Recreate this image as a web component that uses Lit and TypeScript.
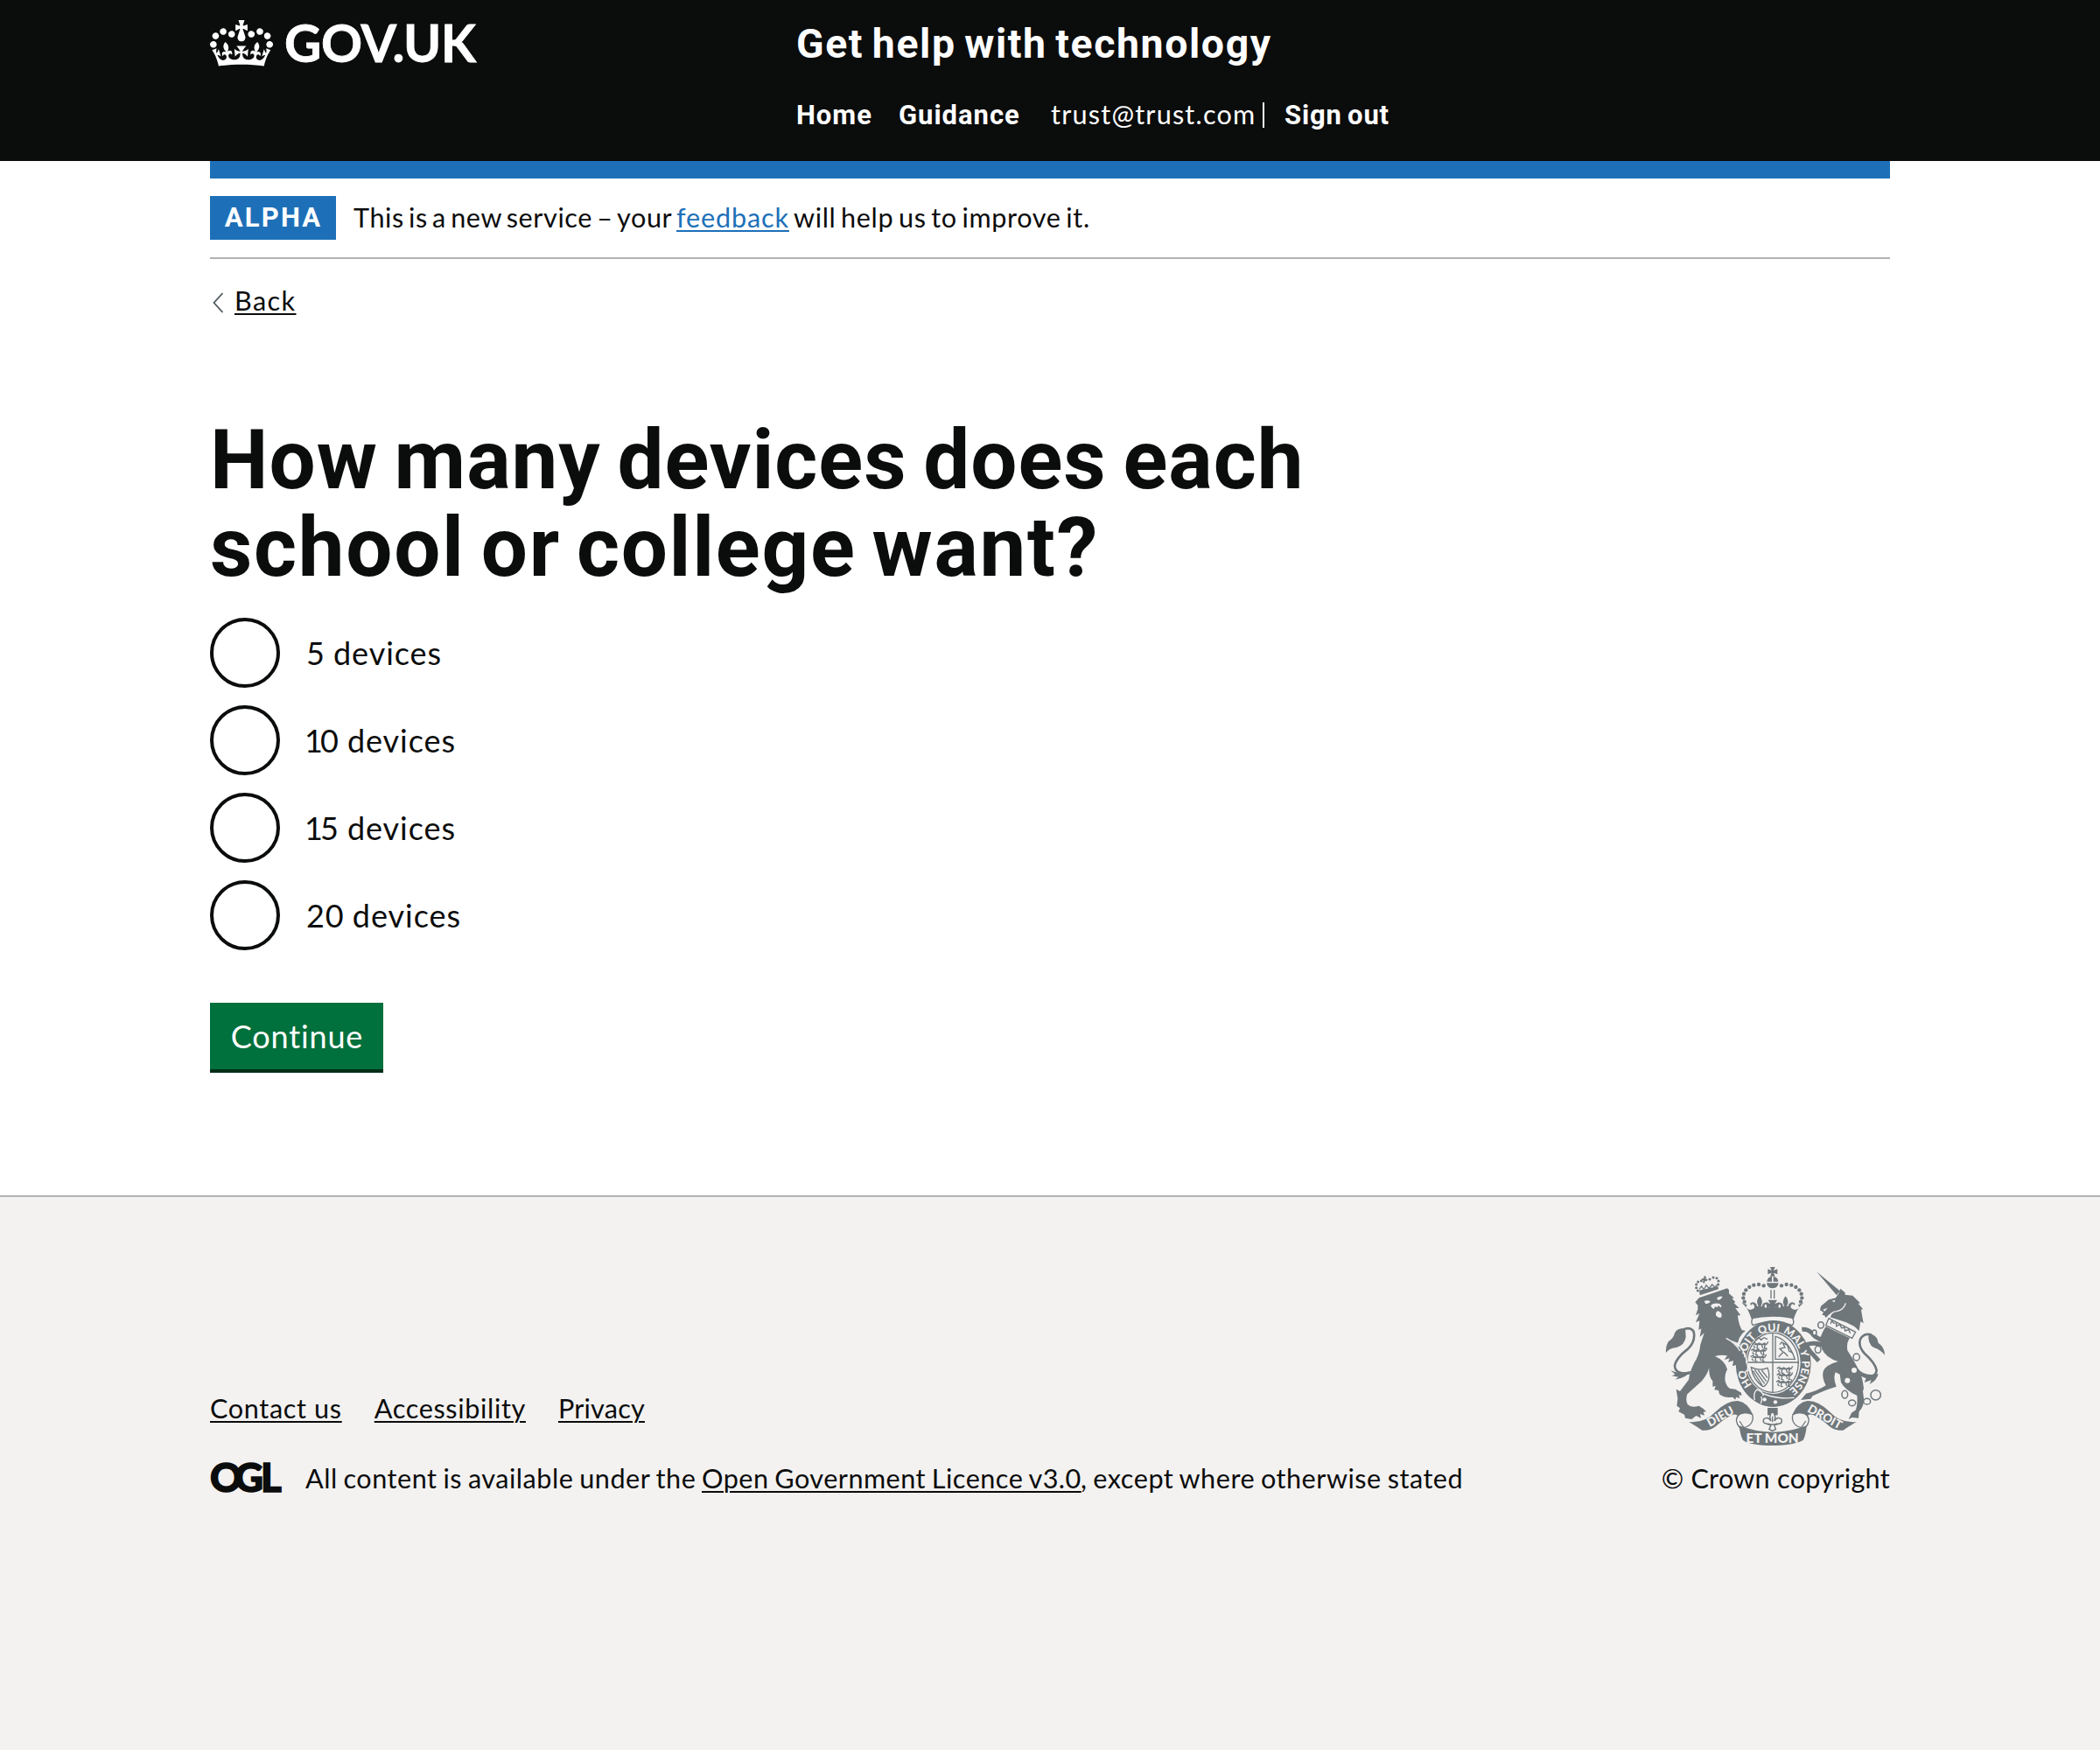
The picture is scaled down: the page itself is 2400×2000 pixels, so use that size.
import { LitElement, html, svg, css } from "lit";
import { customElement, property } from "lit/decorators.js";

const CROWN =
  "M25 30.2c3.5 1.5 7.7-.2 9.1-3.7 1.5-3.6-.2-7.8-3.9-9.2-3.6-1.4-7.6.3-9.1 3.9-1.4 3.5.3 7.5 3.9 9zM9 39.5c3.6 1.5 7.8-.2 9.2-3.7 1.5-3.6-.2-7.8-3.9-9.1-3.6-1.5-7.6.2-9.1 3.8-1.4 3.5.3 7.5 3.8 9zM4.4 57.2c3.5 1.5 7.7-.2 9.1-3.8 1.5-3.6-.2-7.7-3.9-9.1-3.5-1.5-7.6.3-9.1 3.8-1.4 3.5.3 7.6 3.9 9.1zm38.3-21.4c3.5 1.5 7.7-.2 9.1-3.8 1.5-3.6-.2-7.7-3.9-9.1-3.6-1.5-7.6.3-9.1 3.8-1.3 3.6.4 7.7 3.9 9.1zm64.4-5.6c-3.6 1.5-7.8-.2-9.1-3.7-1.5-3.6.2-7.8 3.8-9.2 3.6-1.4 7.7.3 9.2 3.9 1.3 3.5-.4 7.5-3.9 9zm15.9 9.3c-3.6 1.5-7.7-.2-9.1-3.7-1.5-3.6.2-7.8 3.7-9.1 3.6-1.5 7.7.2 9.2 3.8 1.5 3.5-.3 7.5-3.8 9zm4.7 17.7c-3.6 1.5-7.8-.2-9.2-3.8-1.5-3.6.2-7.7 3.9-9.1 3.6-1.5 7.7.3 9.2 3.8 1.3 3.5-.4 7.6-3.9 9.1zM89.3 35.8c-3.6 1.5-7.8-.2-9.2-3.8-1.4-3.6.2-7.7 3.9-9.1 3.6-1.5 7.7.3 9.2 3.8 1.4 3.6-.3 7.7-3.9 9.1zM69.7 17.7l8.9 4.7V9.3l-8.9 2.8c-.2-.3-.5-.6-.9-.9L72.4 0H59.6l3.5 11.2c-.3.3-.6.5-.9.9l-8.8-2.8v13.1l8.8-4.7c.3.3.6.7.9.9l-5 15.4v.1c-.2.8-.4 1.6-.4 2.4 0 4.1 3.1 7.5 7 8.1h.2c.3 0 .7.1 1 .1.4 0 .7 0 1-.1h.2c4-.6 7.1-4.1 7.1-8.1 0-.8-.1-1.7-.4-2.4V34l-5.1-15.4c.4-.2.7-.6 1-.9zM66 92.8c16.9 0 32.8 1.1 47.1 3.2 4-16.9 8.9-26.7 14-33.5l-9.6-3.4c1 4.9 1.1 7.2 0 10.2-1.5-1.4-3-4.3-4.2-8.7L108.6 76c2.8-2 5-3.2 7.5-3.3-4.4 9.4-10 11.9-13.6 11.2-4.3-.8-6.3-4.6-5.6-7.9 1-4.7 5.7-5.9 8-.5 4.3-8.7-3-11.4-7.6-8.8 7.1-7.2 7.9-13.5 2.1-21.1-8 6.1-8.1 12.3-4.5 20.8-4.7-5.4-12.1-2.5-9.5 6.2 3.4-5.2 7.9-2 7.2 3.1-.6 4.3-6.4 7.8-13.5 7.2-10.3-.9-10.9-8-11.2-13.8 2.5-.5 7.1 1.8 11 7.3L80.2 60c-4.1 4.4-8 5.3-12.3 5.4 1.4-4.4 8-11.6 8-11.6H55.5s6.4 7.2 7.9 11.6c-4.2-.1-8-1-12.3-5.4l1.4 16.4c3.9-5.5 8.5-7.7 10.9-7.3-.3 5.8-.9 12.8-11.1 13.8-7.2.6-12.9-2.9-13.5-7.2-.7-5 3.8-8.3 7.1-3.1 2.7-8.7-4.6-11.6-9.4-6.2 3.7-8.5 3.6-14.7-4.6-20.8-5.8 7.6-5 13.9 2.2 21.1-4.7-2.6-11.9.1-7.7 8.8 2.3-5.5 7.1-4.2 8.1.5.7 3.3-1.3 7.1-5.7 7.9-3.5.7-9-1.8-13.5-11.2 2.5.1 4.7 1.3 7.5 3.3l-4.7-15.4c-1.2 4.4-2.7 7.2-4.3 8.7-1.1-3-.9-5.3 0-10.2l-9.5 3.4c5 6.9 9.9 16.7 14 33.5 14.8-2.1 30.8-3.2 47.7-3.2z";

const BEADS: [number, number][] = [
  [407, 148], [390, 144], [373, 146], [358, 153], [346, 163], [339, 176], [337, 190], [341, 203],
];

@customElement("royal-arms")
class RoyalArms extends LitElement {
  static styles = css`
    :host { display: block; width: 250px; height: 204px; }
    svg { display: block; width: 100%; height: 100%; overflow: visible; }
    .ink { fill: #6f777b; }
    .paper { fill: #f3f2f1; }
    .line { fill: none; stroke: #6f777b; stroke-width: 4; }
    .tail { fill: none; stroke: #6f777b; stroke-width: 8; stroke-linecap: round; }
    .leg { fill: none; stroke: #6f777b; stroke-width: 15; stroke-linejoin: round; }
    .gap { fill: none; stroke: #f3f2f1; stroke-width: 4; }
    .motto { fill: #f3f2f1; font: 900 37px Lato, sans-serif; text-anchor: middle; }
    .mon { font-size: 46px; }
    .side { font-size: 41px; }
  `;

  private halfCrown() {
    return svg`
      ${BEADS.map(([x, y]) => svg`<circle class="ink" cx=${x} cy=${y} r="6.5"/>`)}
      <path class="ink" d="M331 206L350 214L346 222Q356 236 370 228Q380 222 372 212Q366 208 364 216L360 210Q366 202 376 206Q384 210 384 218L389 218Q378 200 393 184Q408 200 397 218L402 218Q402 208 412 206Q420 204 424 210L420 216Q412 208 410 216Q408 226 420 226Q430 224 433 212L438 212V236Q390 232 360 246Q350 222 331 206Z"/>
    `;
  }

  private ribbonEnd() {
    return svg`
      <path class="ink" d="M150 615Q205 620 240 582Q280 542 318 543Q352 548 370 590Q340 578 318 594Q306 584 286 598Q262 612 240 632Q222 646 196 644Q176 630 150 615Z"/>
      <path class="line" d="M318 594Q306 612 324 634Q348 638 362 622Q374 606 368 590Q348 580 330 586Q316 592 314 606M324 612Q336 630 350 652"/>
    `;
  }

  private lions(x: number, y: number) {
    return svg`<path class="line" d="M${x} ${y}l8 -5l6 6l10 -4l8 5l10 -5l8 6M${x + 4} ${y + 6}l6 8M${x + 6} ${y + 2}h40M${x + 18} ${y + 2}l-2 13l7 1M${x + 32} ${y + 2}l4 12M${x + 44} ${y}l-3 15l7 0M${x + 50} ${y}l4 -8"/>`;
  }

  render() {
    return html`<svg viewBox="72 84 750 612" preserveAspectRatio="none" aria-hidden="true">
      <!-- central crown -->
      <path class="ink" d="M429 84H446L441 96L454 91V109L441 104L446 116H429L434 104L421 109V91L434 96Z"/>
      <path class="ink" d="M418 134Q420 117 435 117V134ZM440 117Q455 118 457 134H440ZM417 139H458Q455 157 437 157Q420 157 417 139Z"/>
      <path class="line" d="M432 163V192M443 163V192"/>
      <path class="ink" d="M422 197H453L445 211L458 205V228L444 220L450 234H425L431 220L417 228V205L430 211Z"/>
      ${this.halfCrown()}
      <g transform="translate(875 0) scale(-1 1)">${this.halfCrown()}</g>
      <path class="ink" d="M354 232Q437 214 521 232L510 262Q437 246 365 262Z"/>
      <path class="line" d="M372 256Q360 270 370 284Q437 260 505 284Q515 270 503 256"/>

      <!-- garter and shield -->
      <ellipse class="ink" cx="440" cy="415" rx="129" ry="148"/>
      <ellipse class="paper" cx="439" cy="412" rx="94" ry="107"/>
      <ellipse class="line" cx="438" cy="412" rx="88" ry="102"/>
      <path class="line" d="M438 310V514M350 411H526"/>
      ${this.lions(368, 348)}${this.lions(364, 370)}${this.lions(362, 392)}
      <path class="line" d="M380 332l10 -6l8 8l10 -8l12 6"/>
      ${this.lions(452, 432)}${this.lions(452, 454)}${this.lions(450, 478)}
      <path class="line" d="M447 322Q490 332 514 400H447ZM458 392l16 -16l-12 -12l18 -4l-8 -16l16 8l6 20l14 8M476 376l14 14M462 350l8 -10"/>
      <path class="line" d="M364 428Q392 442 420 430Q428 450 424 470Q414 494 404 494Q370 470 364 428ZM376 436l34 48M388 438l28 38M400 438l20 26M370 440l32 50"/>
      <path class="ink" d="M340 508Q360 520 372 530Q372 508 384 504Q398 508 402 524Q440 542 508 536Q480 562 440 563Q400 562 378 542Z"/>
      <path class="gap" d="M376 540Q370 516 384 504Q404 510 406 526M396 552Q404 540 398 528M404 518Q450 538 512 532"/>
      <circle class="paper" cx="410" cy="538" r="6.5"/>
      <circle class="paper" cx="447" cy="547" r="6.5"/>
      <path id="ring" fill="none" d="M440 523A98 109 0 0 1 440 304A98 109 0 0 1 440 523"/>
      <text class="motto"><textPath href="#ring" startOffset="17.2%">HO</textPath></text>
      <text class="motto"><textPath href="#ring" startOffset="34%">SOIT</textPath></text>
      <text class="motto"><textPath href="#ring" startOffset="47.8%">QUI</textPath></text>
      <text class="motto"><textPath href="#ring" startOffset="61.2%">MAL</textPath></text>
      <text class="motto"><textPath href="#ring" startOffset="70.2%">Y</textPath></text>
      <text class="motto"><textPath href="#ring" startOffset="82.5%">PENSE</textPath></text>

      <!-- lion -->
      <g transform="translate(60 60)">
        <path class="gap" d="M228 262Q290 300 294 380L262 385"/>
        <path class="ink" d="M112 145L125 130L222 97L228 103L228 115L245 130L238 132L250 144L245 148L263 165L250 165L268 190L258 190Q260 218 272 240L285 243Q264 256 258 284L235 275Q262 296 278 326Q286 346 290 372L280 384L265 370L258 380L252 360L240 364L243 345L225 350L230 337L212 342L222 328Q200 324 180 330Q215 345 222 375Q212 392 215 415Q220 436 232 441L250 443L270 455L271 466L262 462L265 474L252 470L250 479L240 470Q210 474 195 460L192 447L178 445L182 432L172 434L172 415Q158 400 160 370Q154 392 135 415L85 460Q78 480 86 495Q98 508 125 500L140 510L150 520L140 521L144 533L129 528L132 542L115 534L100 546L78 542L75 530L55 520L60 508L49 500L52 475L47 443L60 450L90 410Q92 385 110 350Q126 326 130 290L143 250L128 264L133 235L124 240L127 208L114 214L127 183L114 190L121 168L121 155Z"/>
        <path class="paper" d="M143 141Q154 136 164 142Q160 152 148 150ZM186 131Q196 122 206 126Q200 137 190 137ZM165 156Q176 146 196 150L203 158L199 163L192 156L188 162L180 160L176 168L170 164ZM183 182Q187 172 194 176Q206 182 202 196Q192 202 183 190Z"/>
        <path class="gap" d="M218 268Q250 284 266 312"/>
        <path class="ink" d="M126 104L190 90L192 100L128 121ZM142 54L150 57L148 64L155 66L152 73L146 71L144 80L138 77L140 70L134 68L136 62L142 64Z"/>
        ${[[133, 71], [122, 75], [116, 84], [116, 95], [121, 105], [162, 66], [174, 60], [186, 62], [192, 72], [191, 84]].map(
          ([x, y]) => svg`<circle class="ink" cx=${x} cy=${y} r="4.6"/>`,
        )}
        <path class="line" d="M126 100L134 90L142 102L150 86L160 98L170 84L180 94L188 84"/>
        <path class="tail" d="M92 388Q42 392 42 362Q46 336 88 304Q114 278 107 246Q98 230 76 236"/>
        <path class="ink" d="M78 234Q48 234 42 250Q38 268 20 280Q10 296 12 318Q24 302 48 300Q76 292 80 264ZM28 378Q52 392 98 380Q84 402 44 410L54 401L32 397L43 392Z"/>
      </g>

      <!-- unicorn -->
      <g transform="translate(450 60)">
        <path class="leg" d="M160 275Q134 268 122 250Q108 236 88 238"/>
        <path class="leg" d="M162 292Q130 280 104 290Q108 308 126 324L146 346"/>
        <path class="ink" d="M138 40L218 106L207 121Z"/>
        <path class="ink" d="M213 116L220 98L236 112L236 119L262 122L288 148L281 149L297 168L291 171L299 217L289 211L284 243L268 228L240 214L184 196L190 180L178 190L170 198L165 190L157 188L162 179L150 172L153 158L180 136L204 130Z"/>
        <path class="gap" d="M184 194Q190 176 208 176Q232 170 238 148"/>
        <path class="paper" d="M190 140L202 137L200 145ZM160 170L176 164L166 176Z"/>
        <path class="line" d="M180 200L272 247L260 268L170 224ZM186 219l4 -10l8 8l8 -2l0 12l12 -6l6 12l10 -2l2 12l12 -4l6 12"/>
        <path class="ink" d="M170 228L252 268Q240 284 244 310Q264 340 282 375Q296 400 300 440L297 450L300 475Q302 500 284 520L282 542L260 540L248 546L258 524L273 514Q280 490 277 465Q236 446 222 420L218 392L203 385Q194 405 206 434Q170 444 125 466L118 476L84 480L102 458Q140 450 170 430Q156 404 161 382Q168 360 212 348Q170 336 156 304L150 270Q158 246 170 228Z"/>
        <path class="tail" d="M292 395Q340 410 344 378Q338 352 304 322Q280 296 288 272Q300 250 324 256"/>
        <path class="ink" d="M316 252Q348 256 350 284Q372 300 372 326Q356 306 334 300Q314 290 316 252ZM280 372Q300 400 350 390Q346 412 320 426L326 412L302 420L308 406Q288 400 280 372Z"/>
        <circle class="paper" cx="267" cy="378" r="9"/>
        <circle class="paper" cx="244" cy="413" r="9"/>
        ${[[153, 223, 10, 11], [131, 249, 7, 9], [143, 307, 10, 12], [275, 333, 11, 12], [235, 461, 10, 13], [260, 490, 12, 10], [311, 485, 12, 10], [341, 463, 17, 17]].map(
          ([x, y, a, b]) => svg`<ellipse fill="#f3f2f1" stroke="#6f777b" stroke-width="4.5" cx=${x} cy=${y} rx=${a} ry=${b}/>`,
        )}
      </g>

      <!-- ribbon -->
      ${this.ribbonEnd()}
      <g transform="translate(875 0) scale(-1 1)">${this.ribbonEnd()}</g>
      <path class="ink" d="M323 628Q437 672 554 628Q552 660 542 678Q510 696 437 696Q364 696 336 678Q326 660 323 628Z"/>
      <text class="motto mon" x="437" y="687">ET MON</text>
      <text class="motto side" transform="translate(265 609) rotate(-29)">DIEU</text>
      <text class="motto side" transform="translate(610 610) rotate(29)">DROIT</text>
      <path class="ink" d="M420 567H455V592H420Z"/>
      <path d="M437 578Q452 594 443 612Q456 594 468 606Q472 622 456 622Q446 620 443 626L448 640L437 646L426 640L432 626Q428 620 418 622Q402 620 407 606Q420 594 432 612Q422 594 437 578Z" fill="#f3f2f1" stroke="#6f777b" stroke-width="4.5"/>
      <path class="line" d="M420 624H455M437 596V616"/>
    </svg>`;
  }
}

@customElement("device-radio")
class DeviceRadio extends LitElement {
  @property({ type: Number }) count = 0;
  static styles = css`
    :host { display: flex; align-items: center; height: 80px; }
    .ring { box-sizing: border-box; width: 80px; height: 80px; border: 4px solid #0b0c0c; border-radius: 50%; background: #fff; }
    .label { padding-left: 30px; font: 400 36px/80px Lato, "Open Sans", sans-serif; letter-spacing: 0.95px; word-spacing: -1px; color: #0b0c0c; white-space: nowrap; }
    .narrow { margin-left: -2px; letter-spacing: -3px; }
  `;
  render() {
    const digits = String(this.count);
    const narrow = digits.startsWith("1");
    return html`<span class="ring"></span><span class="label">${narrow ? html`<span class="narrow">1</span>${digits.slice(1)}` : digits} devices</span>`;
  }
}

@customElement("app-root")
class AppRoot extends LitElement {
  static styles = css`
    :host { display: flex; flex-direction: column; min-height: 2000px; background: #fff; color: #0b0c0c; font: 400 30.6px/40px Lato, "Open Sans", sans-serif; white-space: nowrap; }
    .wrap { width: 1920px; margin: 0 auto; }
    header { height: 184px; background: #0b0c0c; color: #fff; }
    .head { display: grid; grid-template-columns: 670px 1fr; }
    .brand { display: flex; padding-top: 18px; }
    .crown { width: 72px; height: 53px; margin: 5px 13px 0 0; }
    .gov { font: 700 58.3px/60px Lato, sans-serif; letter-spacing: -0.3px; -webkit-text-stroke: 0.8px #fff; }
    .title { padding-top: 25px; font: 700 46.4px/50px Roboto, sans-serif; letter-spacing: 1.6px; word-spacing: -3.5px; }
    .nav { display: flex; align-items: baseline; padding-top: 36px; }
    .nav b { font: 700 31px/40px Roboto, sans-serif; letter-spacing: 0.97px; }
    .nav .out { word-spacing: -2px; letter-spacing: 0.8px; }
    .home { width: 117px; }
    .guide { width: 174px; }
    .mail { width: 242px; letter-spacing: 1.2px; }
    .bar { width: 2px; height: 29px; margin-right: 23px; background: #fff; align-self: center; }
    .strip { height: 20px; background: #1d70b8; }
    .phase { display: flex; height: 50px; padding: 20px 0; border-bottom: 2px solid #b1b4b6; }
    .tag { width: 144px; background: #1d70b8; color: #fff; text-align: center; font: 700 31px/50px Roboto, sans-serif; letter-spacing: 2.2px; text-indent: 1px; }
    .note { display: flex; padding-left: 20px; line-height: 50px; letter-spacing: 0.6px; }
    .lead { width: 369px; word-spacing: -3.2px; }
    .rest { padding-left: 6px; word-spacing: -2.8px; letter-spacing: 0.65px; }
    .u { text-decoration: underline; text-decoration-thickness: 2px; text-underline-offset: 3px; }
    .feedback { width: 128px; color: #1d70b8; letter-spacing: 0.85px; }
    .back { display: flex; align-items: center; padding-top: 28px; }
    .chev { width: 12px; height: 24px; margin: 4px 13px 0 3px; }
    .back .u { letter-spacing: 1.4px; }
    h1 { margin: 112px 0 0; font: 700 94.2px/100px Roboto, sans-serif; }
    .one { display: block; letter-spacing: 0.98px; word-spacing: -5.6px; }
    .two { display: block; letter-spacing: 1.7px; word-spacing: -7px; }
    .radios { display: grid; gap: 20px; padding-top: 30px; }
    .go { width: 198px; height: 76px; margin-top: 60px; background: #00703c; box-shadow: 0 4px 0 #002d18; color: #fff; font-size: 36px; line-height: 76px; text-align: center; letter-spacing: 0.83px; text-indent: 1px; }
    footer { flex: 1; margin-top: 144px; border-top: 2px solid #b1b4b6; background: #f3f2f1; }
    .foot { display: flex; justify-content: space-between; padding-top: 80px; }
    .meta { padding-top: 142px; }
    .links { display: flex; gap: 37px; letter-spacing: 0.65px; }
    .priv { letter-spacing: 0.2px; }
    .licence { display: flex; padding-top: 40px; letter-spacing: 0.52px; word-spacing: -1.5px; }
    .ogl { width: 109px; margin-top: -2px; font: 900 45.5px/40px Lato, sans-serif; letter-spacing: -9px; word-spacing: 0; -webkit-text-stroke: 1.5px #0b0c0c; }
    .g { letter-spacing: -3px; }
    .under { width: 453px; }
    .open { width: 433px; letter-spacing: 0.48px; }
    .arms { display: flex; flex-direction: column; align-items: flex-end; }
    royal-arms { margin-right: 6px; }
    .copy { padding-top: 18px; letter-spacing: 0.28px; }
  `;

  render() {
    return html`
      <header>
        <div class="wrap head">
          <div class="brand">
            <svg class="crown" viewBox="0 0 132 97" preserveAspectRatio="none"><path fill="#fff" d=${CROWN} /></svg>
            <span class="gov">GOV.UK</span>
          </div>
          <div>
            <div class="title">Get help with technology</div>
            <nav class="nav">
              <b class="home">Home</b><b class="guide">Guidance</b><span class="mail">trust@trust.com</span><i class="bar"></i><b class="out">Sign out</b>
            </nav>
          </div>
        </div>
      </header>
      <main class="wrap">
        <div class="strip"></div>
        <div class="phase">
          <span class="tag">ALPHA</span>
          <div class="note"><span class="lead">This is a new service – your</span><span class="u feedback">feedback</span><span class="rest">will help us to improve it.</span></div>
        </div>
        <div class="back">
          <svg class="chev" viewBox="0 0 12 24"><path d="M11.5 1L1.5 12L11.5 23" fill="none" stroke="#505a5f" stroke-width="1.8" /></svg>
          <span class="u">Back</span>
        </div>
        <h1><span class="one">How many devices does each</span><span class="two">school or college want?</span></h1>
        <div class="radios">
          ${[5, 10, 15, 20].map((n) => html`<device-radio .count=${n}></device-radio>`)}
        </div>
        <div class="go">Continue</div>
      </main>
      <footer>
        <div class="wrap foot">
          <div class="meta">
            <div class="links"><span class="u">Contact us</span><span class="u">Accessibility</span><span class="u priv">Privacy</span></div>
            <div class="licence"><span class="ogl">O<span class="g">G</span>L</span><span class="under">All content is available under the</span><span class="u open">Open Government Licence v3.0</span><span>, except where otherwise stated</span></div>
          </div>
          <div class="arms"><royal-arms></royal-arms><span class="copy">© Crown copyright</span></div>
        </div>
      </footer>
    `;
  }
}
